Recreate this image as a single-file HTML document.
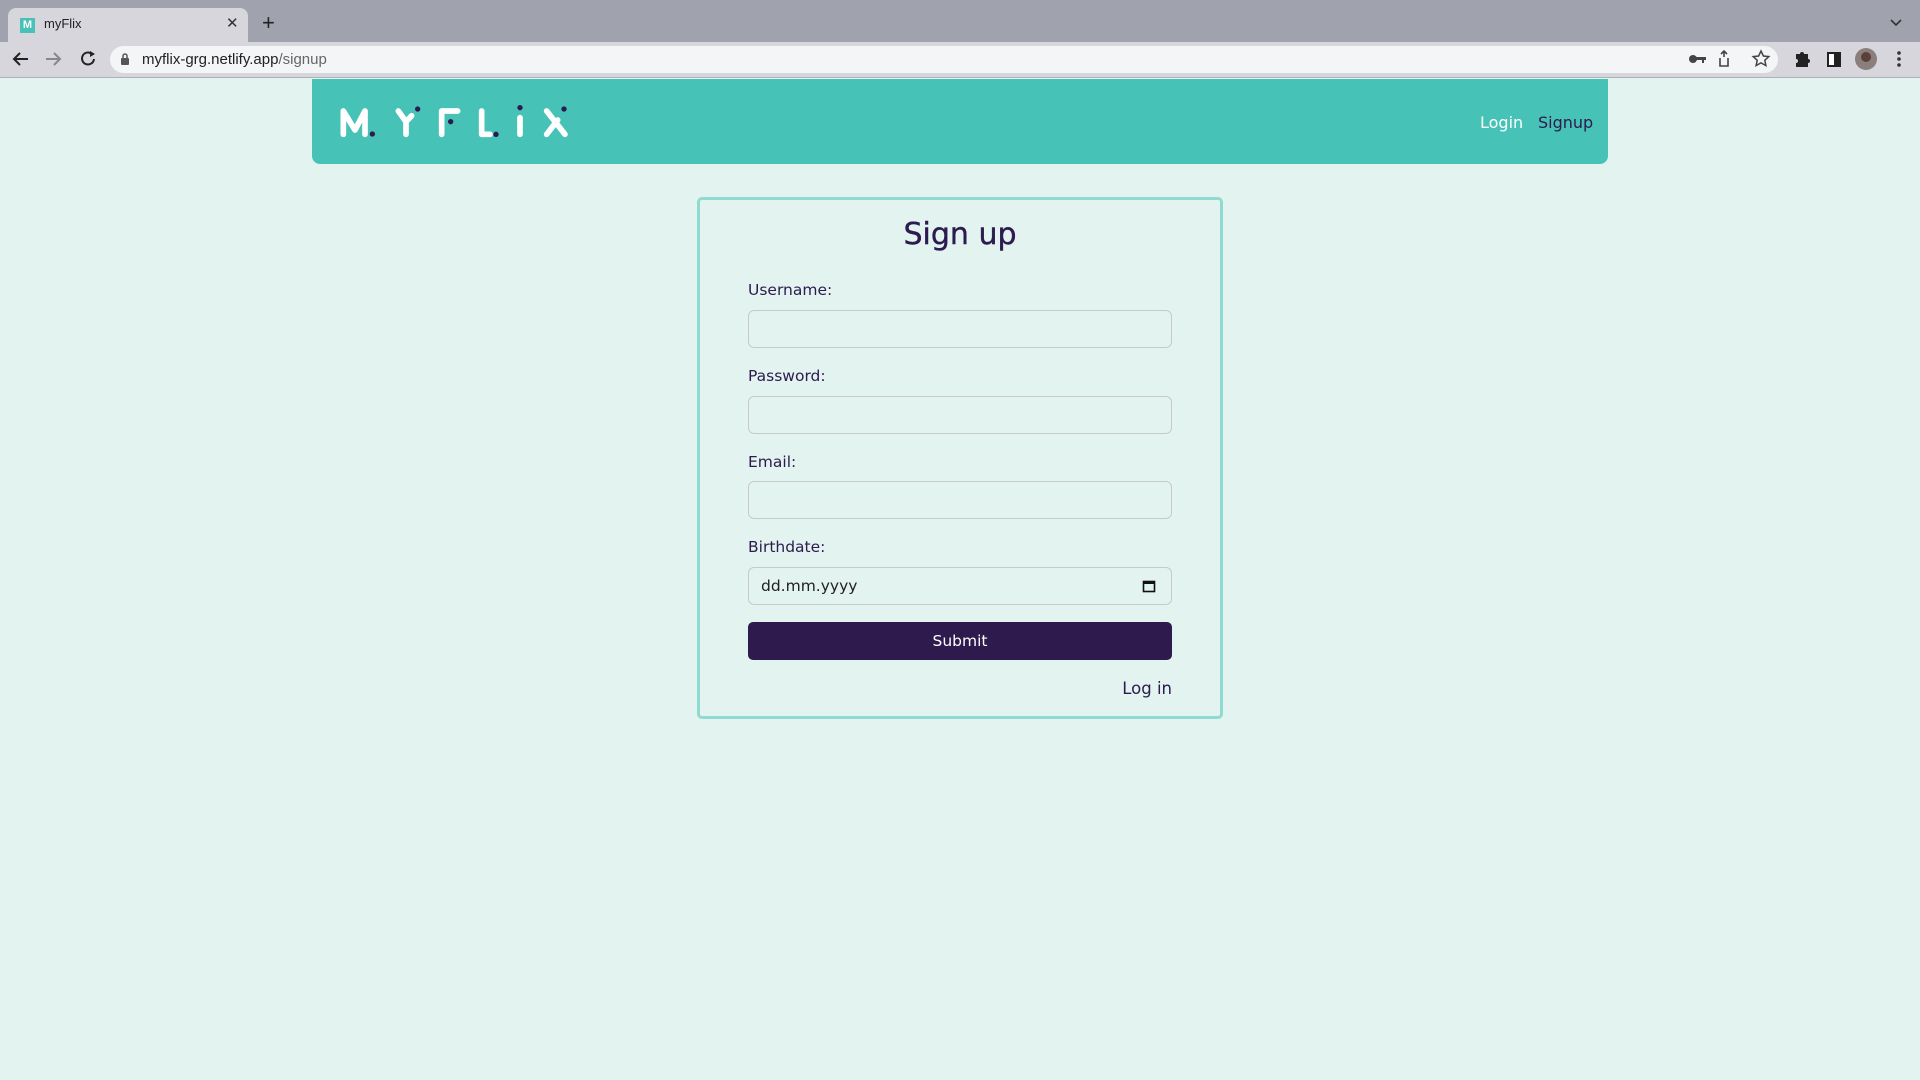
<!DOCTYPE html>
<html><head><meta charset="utf-8"><style>
*{box-sizing:border-box;margin:0;padding:0}
body{width:1920px;height:1080px;background:#e3f3ef;font-family:"DejaVu Sans","Liberation Sans",sans-serif;position:relative;overflow:hidden;color:#2d1a4e}
.abs{position:absolute}
#tabs{left:0;top:0;width:1920px;height:42px;background:#a0a2ae}
#tab{left:8px;top:8px;width:240px;height:34px;background:#d6d6dc;border-radius:8px 8px 0 0}
#bar{left:0;top:42px;width:1920px;height:36px;background:#d6d6dc;border-bottom:1px solid #b0b0b6}
#omni{left:110px;top:46px;width:1668px;height:27px;background:#f4f5f7;border-radius:14px}
.lbl{position:absolute;left:748px;font-size:15.5px;color:#2d1a4e}
.inp{position:absolute;left:748px;width:424px;height:38px;border:1px solid #c6cad0;border-radius:6px;background:#e3f3ef}
</style></head><body>
<div id="tabs" class="abs"></div>
<div id="tab" class="abs"></div>
<div class="abs" style="left:20px;top:18px;width:15px;height:15px;background:#47c2b6;color:#fff;font-size:11px;font-weight:bold;text-align:center;line-height:15px;font-family:'Liberation Sans',sans-serif">M</div>
<div class="abs" style="left:44px;top:16px;font-size:13px;color:#222;font-family:'Liberation Sans',sans-serif">myFlix</div>
<div class="abs" style="left:226px;top:14px;font-size:15px;color:#333;font-family:'Liberation Sans',sans-serif">✕</div>
<div class="abs" style="left:262px;top:10px;font-size:22px;color:#222;font-family:'Liberation Sans',sans-serif">+</div>
<svg class="abs" style="left:1888px;top:18px" width="16" height="10"><path d="M3 2l5 5 5-5" stroke="#333" stroke-width="1.6" fill="none"/></svg>
<div id="bar" class="abs"></div>
<div id="omni" class="abs"></div>
<svg class="abs" style="left:0;top:42px" width="110" height="36">
<path d="M28 17H14M20 11l-6 6 6 6" stroke="#222" stroke-width="2" fill="none"/>
<path d="M46 17h14M54 11l6 6-6 6" stroke="#888" stroke-width="2" fill="none"/>
<path d="M92 12a6 6 0 1 0 2 5" stroke="#222" stroke-width="2" fill="none"/><path d="M90 9l5 3-5 3z" fill="#222"/>
</svg>
<svg class="abs" style="left:120px;top:52px" width="10" height="14"><rect x="1" y="6" width="8" height="7" rx="1" fill="#555"/><path d="M3 6V4a2 2 0 0 1 4 0v2" stroke="#555" stroke-width="1.5" fill="none"/></svg>
<div class="abs" style="left:142px;top:51px;font-size:15px;color:#222;font-family:'Liberation Sans',sans-serif">myflix-grg.netlify.app<span style="color:#666">/signup</span></div>
<svg class="abs" style="left:1680px;top:46px" width="240" height="28">
<circle cx="13" cy="13" r="4" fill="#444"/><rect x="15" y="11" width="11" height="3" fill="#444"/><rect x="22" y="13" width="2" height="4" fill="#444"/>
<path d="M44 11v-6M41 8l3-3 3 3M40 12v8h8v-8" stroke="#444" stroke-width="1.6" fill="none"/>
<path d="M81 5l2.4 5 5.4.6-4 3.7 1.1 5.3-4.9-2.7-4.9 2.7 1.1-5.3-4-3.7 5.4-.6z" stroke="#444" stroke-width="1.5" fill="none"/>
<path d="M116 8h4a2 2 0 0 1 4 0h4v5a2 2 0 0 1 0 4v4h-12v-4a2 2 0 0 0 0-4z" fill="#222"/>
<rect x="148" y="7" width="12" height="13" stroke="#222" stroke-width="2" fill="#fff"/><rect x="154" y="7" width="6" height="13" fill="#222"/>
<circle cx="186" cy="13" r="11" fill="#8a7f7a"/><circle cx="186" cy="11" r="5" fill="#5a4038"/>
<circle cx="219" cy="7" r="1.8" fill="#333"/><circle cx="219" cy="13" r="1.8" fill="#333"/><circle cx="219" cy="19" r="1.8" fill="#333"/>
</svg>

<div class="abs" style="left:312px;top:79px;width:1296px;height:85px;background:#47c2b6;border-radius:0 0 8px 8px"></div>
<svg class="abs" style="left:330px;top:95px" width="250" height="55" viewBox="0 0 750 165">
<g stroke="#fff" stroke-width="17" stroke-linecap="round" stroke-linejoin="round" fill="none">
<path d="M40 118V48L75 105L105 48V118"/>
<path d="M205 48L228 80L245 62M228 80V118"/>
<path d="M335 118V48H383"/>
<path d="M455 48V118H480"/>
<path d="M570 68V118"/>
<path d="M650 48L705 118M650 118L683 75"/>
</g>
<g fill="#2d1a4e"><circle cx="127" cy="117" r="8"/><circle cx="263" cy="42" r="8"/><circle cx="362" cy="80" r="8"/><circle cx="498" cy="118" r="8"/><circle cx="570" cy="38" r="8"/><circle cx="702" cy="42" r="8"/></g>
</svg>
<div class="abs" style="left:1480px;top:113px;font-size:16px;color:#fff">Login</div>
<div class="abs" style="left:1538px;top:113px;font-size:16px;color:#2d1a4e">Signup</div>

<div class="abs" style="left:697px;top:197px;width:526px;height:522px;border:3px solid #90dbd1;border-radius:5px"></div>
<div class="abs" style="left:698px;width:524px;top:217px;text-align:center;font-size:30px;color:#2d1a4e;-webkit-text-stroke:0.4px #2d1a4e">Sign up</div>
<div class="lbl" style="top:281px">Username:</div>
<div class="inp" style="top:310px"></div>
<div class="lbl" style="top:367px">Password:</div>
<div class="inp" style="top:396px"></div>
<div class="lbl" style="top:453px">Email:</div>
<div class="inp" style="top:481px"></div>
<div class="lbl" style="top:538px">Birthdate:</div>
<div class="inp" style="top:567px"></div>
<div class="abs" style="left:761px;top:577px;font-size:15.5px;color:#222">dd.mm.yyyy</div>
<svg class="abs" style="left:1142px;top:579px" width="14" height="14"><rect x="1.5" y="2.5" width="11" height="10" stroke="#111" stroke-width="1.6" fill="none"/><rect x="1.5" y="2" width="11" height="3" fill="#111"/></svg>
<div class="abs" style="left:748px;top:622px;width:424px;height:38px;background:#2e1a4d;border-radius:5px;color:#fff;font-size:15.5px;text-align:center;line-height:38px">Submit</div>
<div class="abs" style="left:1052px;width:120px;top:679px;text-align:right;font-size:16.5px;color:#2d1a4e">Log in</div>
</body></html>
